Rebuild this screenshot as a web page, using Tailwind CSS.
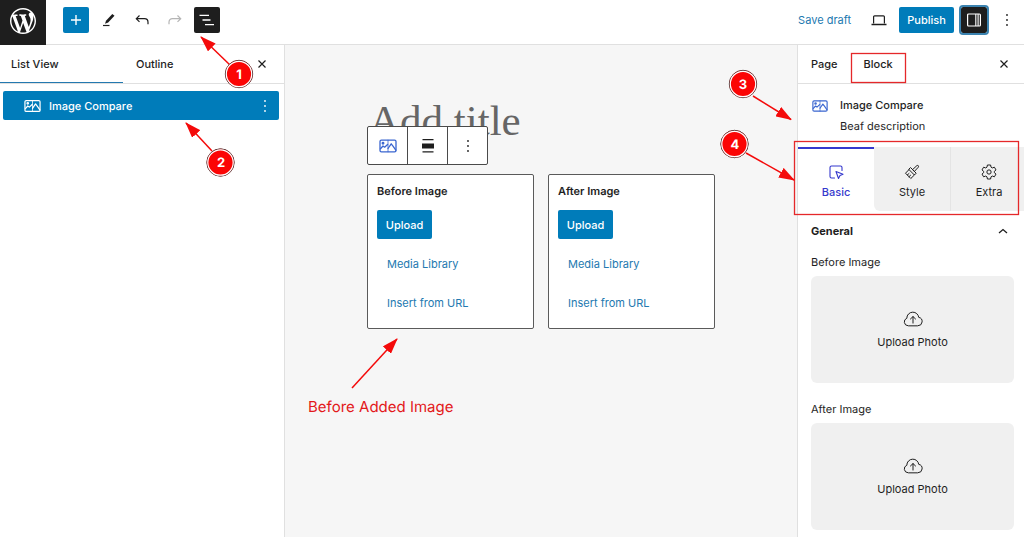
<!DOCTYPE html>
<html lang="en">
<head>
  <meta charset="UTF-8" />
  <meta name="viewport" content="width=device-width, initial-scale=1.0" />
  <title>Edit Page</title>
  <script src="https://cdn.jsdelivr.net/npm/@tailwindcss/browser@4"></script>
</head>
<body class="relative h-screen overflow-hidden flex flex-col bg-white font-['Inter',sans-serif] text-[11px] leading-4 text-[#1e1e1e] [text-rendering:geometricPrecision]">

  <!-- Shared icons -->
  <svg class="absolute size-0" aria-hidden="true">
    <symbol id="icon-compare" viewBox="0 0 18 14">
      <g fill="none" stroke="currentColor" stroke-width="1.3" stroke-linejoin="round" stroke-linecap="round">
        <rect x="1" y="1.2" width="16" height="11.6" rx="1.4" />
        <path d="M9 1.2v11.6" stroke-width=".8" />
        <path d="M1.5 9.8 4 7l1.6 1.2L8.6 5.4M9 9.5l3.2-4.700L14 7.200l2.800 4" />
        <circle cx="4" cy="4.2" r=".8" />
      </g>
    </symbol>
    <symbol id="icon-close" viewBox="0 0 10 10">
      <path d="M1.500 1.500l7 7M8.500 1.500l-7 7" fill="none" stroke="currentColor" stroke-width="1.2" />
    </symbol>
    <symbol id="icon-dots" viewBox="0 0 4 14">
      <g fill="currentColor">
        <circle cx="2" cy="2" r=".9" /><circle cx="2" cy="7" r=".9" /><circle cx="2" cy="12" r=".9" />
      </g>
    </symbol>
    <symbol id="icon-cloud" viewBox="0 0 22 18">
      <g fill="none" stroke="currentColor" stroke-width="1.1" stroke-linecap="round" stroke-linejoin="round">
        <path d="M5.500 16.500a4.300 4.300 0 0 1-1.300-8.300A6.600 6.600 0 0 1 10.700 1.500a6.500 6.500 0 0 1 6.600 5.700 4.700 4.700 0 0 1-.8 9.300z" />
        <path d="M11 13.500V6.500M8.200 9 11 6.300 13.800 9" />
      </g>
    </symbol>
    <marker id="arrow" viewBox="0 0 16 11" markerWidth="16" markerHeight="11" refX="15" refY="5.5" orient="auto" markerUnits="userSpaceOnUse">
      <path d="M0 0 16 5.500 0 11z" fill="#f40a0a" />
    </marker>
  </svg>

  <!-- Top bar -->
  <header class="flex items-start h-[45px] shrink-0 border-b border-[#e0e0e0]">
    <a href="#" aria-label="View pages" class="flex items-center justify-center w-[46px] h-[45px] pb-1 shrink-0 bg-[#1e1e1e] text-white">
      <svg class="size-[26px]" viewBox="0 0 20 20" fill="currentColor"><path d="M20 10c0-5.510-4.490-10-10-10C4.480 0 0 4.490 0 10c0 5.520 4.480 10 10 10 5.510 0 10-4.480 10-10zM7.780 15.370L4.370 6.220c.55-.02 1.170-.08 1.170-.08.5-.06.44-1.130-.06-1.110 0 0-1.450.11-2.370.11-.18 0-.37 0-.58-.01C4.120 2.690 6.870 1.110 10 1.110c2.330 0 4.450.87 6.050 2.340-.68-.11-1.650.39-1.650 1.580 0 .74.45 1.360.9 2.100.35.61.55 1.360.55 2.460 0 1.490-1.400 5-1.400 5l-3.030-8.370c.54-.02.82-.17.82-.17.5-.05.44-1.250-.06-1.220 0 0-1.440.12-2.380.12-.87 0-2.330-.12-2.330-.12-.5-.03-.56 1.200-.06 1.220l.92.08 1.260 3.410zM17.410 10c.24-.64.74-1.870.43-4.250.7 1.290 1.050 2.710 1.050 4.250 0 3.290-1.730 6.240-4.400 7.780.97-2.590 1.940-5.200 2.920-7.780zM6.100 18.090C3.120 16.650 1.110 13.530 1.110 10c0-1.300.23-2.480.72-3.590C3.250 10.300 4.670 14.200 6.100 18.090zm4.030-6.630l2.580 6.980c-.86.29-1.760.45-2.710.45-.79 0-1.570-.11-2.290-.33.81-2.380 1.620-4.740 2.420-7.100z" /></svg>
    </a>
    <div class="flex gap-[7px] pl-[17px] pt-[7px]">
      <button type="button" aria-label="Add block" class="flex items-center justify-center size-[26px] rounded-xs bg-[#007cba] text-white">
        <svg class="size-4" viewBox="0 0 16 16" fill="none" stroke="currentColor" stroke-width="1.4"><path d="M8 3v10M3 8h10" /></svg>
      </button>
      <button type="button" aria-label="Tools" class="flex items-center justify-center size-[26px]">
        <svg class="size-4" viewBox="0 0 16 16"><path d="M5 8.800 11.300 2 13.500 3.800 7.200 10.600 4 11.800z" fill="currentColor" /><path d="M2 13.500h6.500" stroke="currentColor" stroke-width="1.2" /></svg>
      </button>
      <button type="button" aria-label="Undo" class="flex items-center justify-center size-[26px]">
        <svg class="size-4" viewBox="0 0 16 16" fill="none" stroke="currentColor" stroke-width="1.2"><path d="M5.500 3.500 2.300 6.700l3.200 3.200M2.300 6.700h8.200c2.300 0 3.500 1.500 3.500 3.500v2" /></svg>
      </button>
      <button type="button" aria-label="Redo" class="flex items-center justify-center size-[26px] text-[#b5b5b5]">
        <svg class="size-4" viewBox="0 0 16 16" fill="none" stroke="currentColor" stroke-width="1.2"><path d="M10.500 3.500l3.200 3.200-3.200 3.200M13.700 6.700H5.500C3.200 6.700 2 8.200 2 10.200v2" /></svg>
      </button>
      <button type="button" aria-label="List view" class="flex items-center justify-center size-[26px] -ml-px rounded-xs bg-[#1e1e1e] text-white">
        <svg class="size-4" viewBox="0 0 16 16" fill="none" stroke="currentColor" stroke-width="1.3"><path d="M.5 3.400H10M3.500 8H11.500M6 12.600H15" /></svg>
      </button>
    </div>
    <div class="flex items-center gap-[7px] ml-auto pr-1 pt-[7px]">
      <button type="button" class="mr-2 h-[26px] text-[#2379b0]">Save draft</button>
      <button type="button" aria-label="Preview" class="flex items-center justify-center size-[26px]">
        <svg class="w-4 h-3" viewBox="0 0 16 12" fill="none" stroke="currentColor" stroke-width="1.2"><path d="M2.600 9.500V2.800q0-1 1-1h8.800q1 0 1 1v6.700" /><path d="M.5 10.500h15" stroke-width="1.5" /></svg>
      </button>
      <button type="button" class="h-[26px] w-[55px] rounded-xs bg-[#007cba] font-medium text-white">Publish</button>
      <button type="button" aria-label="Settings" class="flex items-center justify-center size-[26px] rounded-xs bg-[#1e1e1e] text-white outline-2 outline-[#3b83b0]">
        <svg class="size-4" viewBox="0 0 16 16" fill="none" stroke="currentColor" stroke-width="1.2"><rect x="1.6" y="2" width="12.8" height="12" rx="1" /><path d="M9.800 2v12M12.100 2v12" stroke-width="1.1" /></svg>
      </button>
      <button type="button" aria-label="Options" class="flex items-center justify-center size-[26px]">
        <svg class="w-1 h-3.5"><use href="#icon-dots" /></svg>
      </button>
    </div>
  </header>

  <div class="flex flex-1 min-h-0">
    <!-- List view -->
    <aside class="w-[285px] shrink-0 border-r border-[#e0e0e0]">
      <div class="flex h-[39px] border-b border-[#e0e0e0] font-medium">
        <button type="button" class="w-[123px] pl-[11px] text-left border-b border-[#2379b0]">List View</button>
        <button type="button" class="px-[13px]">Outline</button>
        <button type="button" aria-label="Close list view" class="ml-auto mr-[9px] flex items-center justify-center size-[26px] mt-1.5">
          <svg class="size-2.5"><use href="#icon-close" /></svg>
        </button>
      </div>
      <div class="flex items-center h-[29px] mt-[7px] ml-[3px] mr-[5px] pl-[21px] pr-3 rounded-xs bg-[#007cba] text-white">
        <a href="#" class="flex items-center gap-2 font-medium">
          <svg class="w-[17px] h-3.5"><use href="#icon-compare" /></svg>
          Image Compare
        </a>
        <button type="button" aria-label="Block options" class="ml-auto">
          <svg class="w-1 h-3.5"><use href="#icon-dots" /></svg>
        </button>
      </div>
    </aside>

    <!-- Canvas -->
    <main class="flex-1 min-w-0 bg-[#f6f6f6]">
      <div class="relative mx-auto w-[348px] pt-[51px]">
        <input type="text" aria-label="Page title" placeholder="Add title" class="block w-full h-[50px] pl-0.5 font-['Liberation_Serif',serif] text-[43px] leading-[50px] placeholder:text-[#666]" />
        <!-- Block toolbar -->
        <div class="absolute left-0 top-[81px] flex h-[39px] divide-x divide-[#4a4a4a] border border-[#4a4a4a] rounded-xs bg-white">
          <button type="button" aria-label="Image Compare" class="flex items-center justify-center w-10 text-[#3a66d0]">
            <svg class="w-[18px] h-3.5"><use href="#icon-compare" /></svg>
          </button>
          <button type="button" aria-label="Align" class="flex items-center justify-center w-10">
            <svg class="w-3 h-3.5" viewBox="0 0 12 14" fill="currentColor"><path d="M.5 0h11v1.200H.5zM0 4.500h12v5H0zM.5 12.300h11v1.200H.5z" /></svg>
          </button>
          <button type="button" aria-label="Options" class="flex items-center justify-center w-[39px]">
            <svg class="w-1 h-3.5"><use href="#icon-dots" /></svg>
          </button>
        </div>
        <div class="grid grid-cols-2 gap-3.5 mt-7">
          <section class="flex flex-col items-start h-[155px] px-[9px] pt-2 border border-[#5a5a5a] rounded-xs bg-white">
            <h2 class="font-semibold">Before Image</h2>
            <button type="button" class="mt-[11px] h-[29px] w-[55px] rounded-xs bg-[#007cba] font-medium text-white">Upload</button>
            <button type="button" class="mt-2.5 h-[29px] px-2.5 text-[#2379b0]">Media Library</button>
            <button type="button" class="mt-2.5 h-[29px] px-2.5 text-[#2379b0]">Insert from URL</button>
          </section>
          <section class="flex flex-col items-start h-[155px] px-[9px] pt-2 border border-[#5a5a5a] rounded-xs bg-white">
            <h2 class="font-semibold">After Image</h2>
            <button type="button" class="mt-[11px] h-[29px] w-[55px] rounded-xs bg-[#007cba] font-medium text-white">Upload</button>
            <button type="button" class="mt-2.5 h-[29px] px-2.5 text-[#2379b0]">Media Library</button>
            <button type="button" class="mt-2.5 h-[29px] px-2.5 text-[#2379b0]">Insert from URL</button>
          </section>
        </div>
        <!-- Callout under the first card -->
        <div class="absolute right-full top-[284px] -mr-[82px] w-[141px] text-[#e3191b]">
          <svg class="block h-[64px] w-full" viewBox="0 0 141 64" fill="none" stroke="#f40a0a" stroke-width="1.5">
            <path d="M44 59 89 10" marker-end="url(#arrow)" />
          </svg>
          <p class="mt-0.5 text-[15px] leading-6 whitespace-nowrap">Before Added Image</p>
        </div>
      </div>
    </main>

    <!-- Block settings -->
    <aside class="w-[227px] shrink-0 overflow-hidden border-l border-[#e0e0e0]">
      <div class="flex h-[39px] border-b border-[#e0e0e0] font-medium">
        <button type="button" class="px-[13px]">Page</button>
        <button type="button" class="px-[13px]">Block</button>
        <button type="button" aria-label="Close settings" class="ml-auto mr-[7px] mt-1.5 flex items-center justify-center size-[26px]">
          <svg class="size-2.5"><use href="#icon-close" /></svg>
        </button>
      </div>
      <div class="flex gap-3 h-[63px] pl-3.5 pt-[13px]">
        <svg class="w-4 h-3.5 mt-0.5 text-[#3a66d0]"><use href="#icon-compare" /></svg>
        <div>
          <h2 class="font-medium">Image Compare</h2>
          <p class="mt-[5px]">Beaf description</p>
        </div>
      </div>
      <div class="flex h-16">
        <button type="button" class="flex flex-col items-center gap-1 w-[76px] shrink-0 pt-[15px] border-t-2 border-[#3538cd] font-medium text-[#3538cd]">
          <svg class="size-4" viewBox="0 0 16 16" fill="none" stroke="currentColor" stroke-width="1.1" stroke-linejoin="round" stroke-linecap="round"><path d="M6.500 14H3.500Q2 14 2 12.500V3.500Q2 2 3.500 2h9Q14 2 14 3.500V6.500" /><path d="M8 7.500l7 2.700-3 1.300-1.500 3z" /></svg>
          Basic
        </button>
        <button type="button" class="flex flex-col items-center gap-1 w-[77px] shrink-0 pt-[17px] rounded-bl-md border-r border-[#e4e4e4] bg-[#f0f0f0]">
          <svg class="size-4" viewBox="0 0 16 16" fill="none" stroke="currentColor" stroke-width="1" stroke-linejoin="round" stroke-linecap="round"><path d="M8.600 5.600 12.800 1.700q1-.6 1.500 0t0 1.500L10.400 7.400" /><path d="M6.800 3.800l5.400 5.400-1.800 1.800L5 5.600z" /><path d="M5 5.600 1.500 9.200 6.800 14.500 10.400 11M3.300 11l1.700-1.500M5 12.700l1.600-1.500" /></svg>
          Style
        </button>
        <button type="button" class="flex flex-col items-center gap-1 w-[76px] shrink-0 pt-[17px] bg-[#f0f0f0]">
          <svg class="size-4" viewBox="0 0 24 24" fill="none" stroke="currentColor" stroke-width="1.5" stroke-linejoin="round"><path d="M9.600 1.500h4.800l.6 3.200 2 1.200 3.100-1.100 2.400 4.100-2.500 2.100v2l2.500 2.100-2.400 4.100-3.100-1.100-2 1.200-.6 3.200H9.600L9 19.300l-2-1.200-3.100 1.100-2.400-4.100L4 13v-2L1.500 8.900l2.400-4.100L7 5.900l2-1.200z" /><circle cx="12" cy="12" r="3.2" /></svg>
          Extra
        </button>
      </div>
      <button type="button" class="flex items-center justify-between w-full h-10 pl-[13px] pr-4 font-bold">
        General
        <svg class="w-2.5 h-1.5" viewBox="0 0 10 6" fill="none" stroke="currentColor" stroke-width="1.3"><path d="M1 5l4-3.500L9 5" /></svg>
      </button>
      <div class="pl-[13px] pr-2.5">
        <p class="pt-[3px]">Before Image</p>
        <button type="button" class="flex flex-col items-center justify-center gap-1.5 w-full h-[107px] mt-1.5 rounded-md bg-[#f0f0f0]">
          <svg class="w-5 h-[18px]"><use href="#icon-cloud" /></svg>
          Upload Photo
        </button>
        <p class="mt-[18px]">After Image</p>
        <button type="button" class="flex flex-col items-center justify-center gap-1.5 w-full h-[107px] mt-1.5 rounded-md bg-[#f0f0f0]">
          <svg class="w-5 h-[18px]"><use href="#icon-cloud" /></svg>
          Upload Photo
        </button>
      </div>
    </aside>
  </div>

  <!-- Numbered callouts, left side -->
  <svg class="absolute left-0 top-0 w-[285px] h-[190px] pointer-events-none" viewBox="0 0 285 190">
    <g stroke="#f40a0a" stroke-width="1.5">
      <path d="M230 65 201 37" marker-end="url(#arrow)" />
      <path d="M212 151 186 123" marker-end="url(#arrow)" />
    </g>
    <g fill="#fb0505" stroke="#4a3030" stroke-width="1">
      <circle cx="239" cy="74" r="13.7" />
      <circle cx="220.5" cy="162.5" r="13.7" />
    </g>
    <g fill="#fb0505" stroke="#fff" stroke-width="1.2">
      <circle cx="239" cy="74" r="12.7" />
      <circle cx="220.5" cy="162.5" r="12.7" />
    </g>
    <g fill="#fff" text-anchor="middle" class="text-[13px] font-bold">
      <text x="239" y="79">1</text>
      <text x="221" y="167">2</text>
    </g>
  </svg>

  <!-- Numbered callouts, right side -->
  <svg class="absolute right-0 top-0 w-[324px] h-[220px] pointer-events-none" viewBox="700 0 324 220">
    <g fill="none" stroke="#e5282a" stroke-width="1.3">
      <rect x="851.5" y="53.5" width="54" height="29" />
      <rect x="794.5" y="141.5" width="224" height="73" />
    </g>
    <g stroke="#f40a0a" stroke-width="1.5">
      <path d="M753 96 791 119.500" marker-end="url(#arrow)" />
      <path d="M746 153 794 180" marker-end="url(#arrow)" />
    </g>
    <g fill="#fb0505" stroke="#4a3030" stroke-width="1">
      <circle cx="743" cy="84" r="13.7" />
      <circle cx="734.5" cy="144" r="13.7" />
    </g>
    <g fill="#fb0505" stroke="#fff" stroke-width="1.2">
      <circle cx="743" cy="84" r="12.7" />
      <circle cx="734.5" cy="144" r="12.7" />
    </g>
    <g fill="#fff" text-anchor="middle" class="text-[13px] font-bold">
      <text x="743" y="89">3</text>
      <text x="735" y="149">4</text>
    </g>
  </svg>
</body>
</html>
